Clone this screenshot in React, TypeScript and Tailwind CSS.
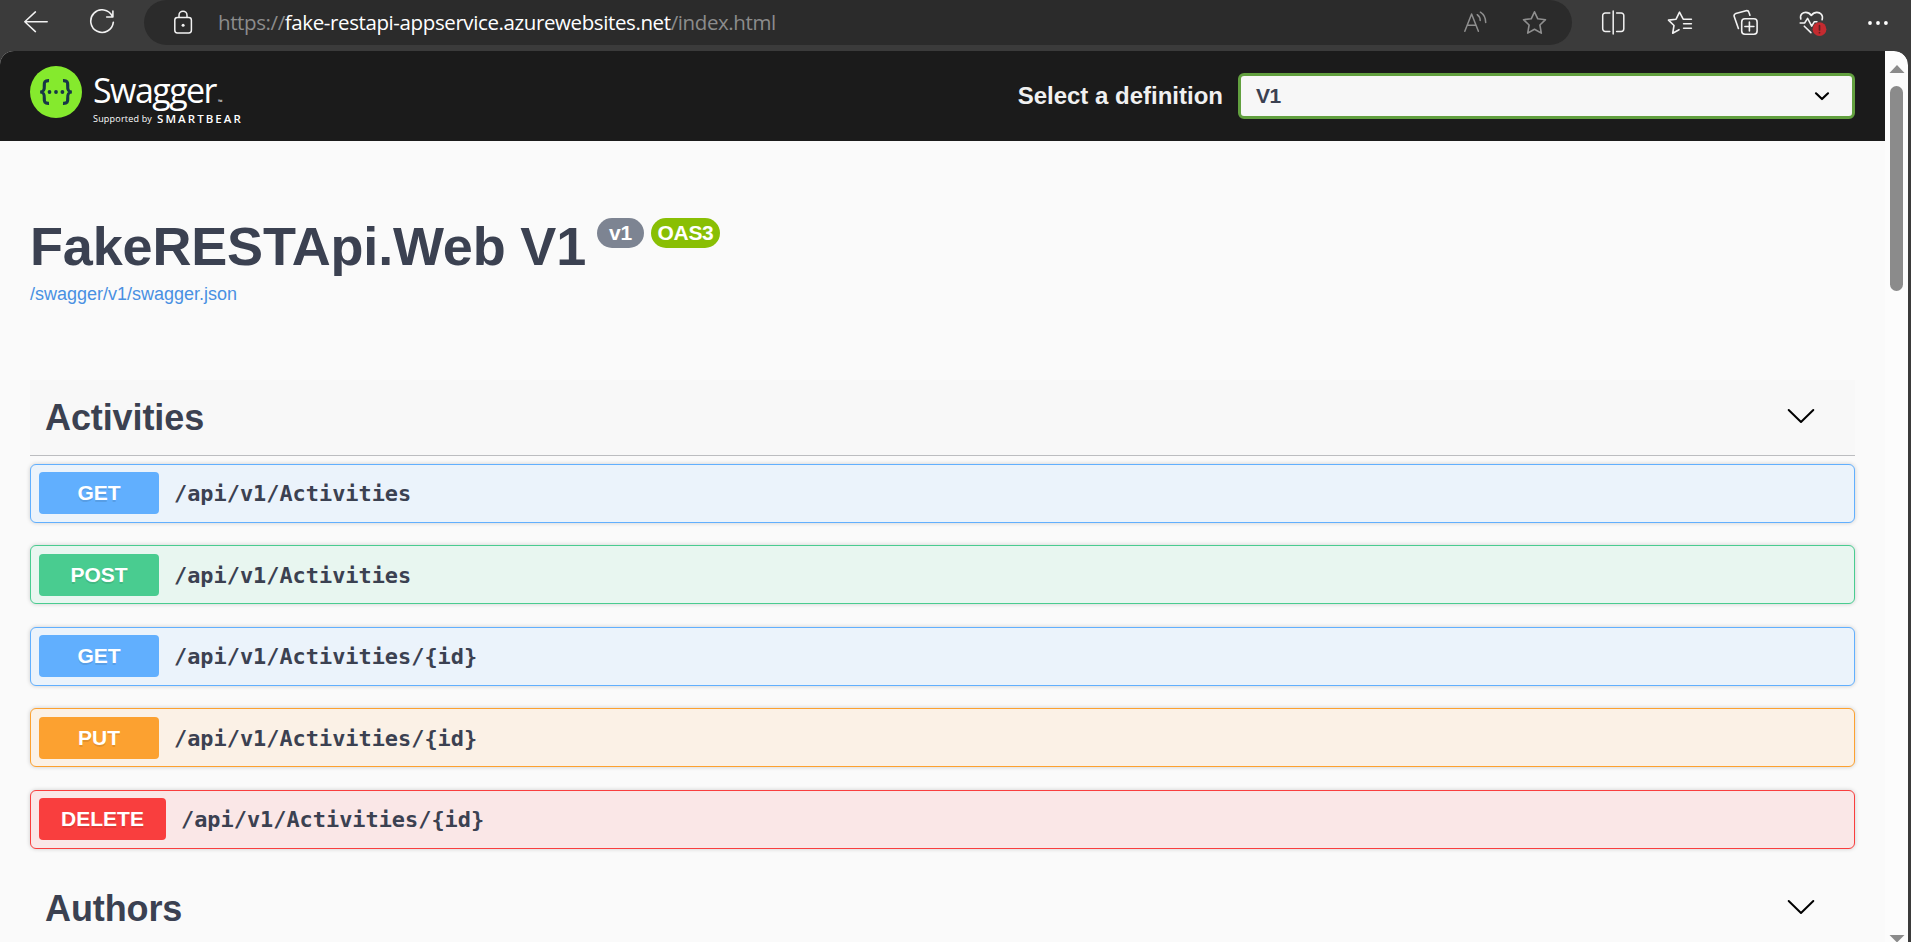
import React from "react";

const sans = "font-['Liberation_Sans',Arial,sans-serif]";

const methods = {
  GET: { row: "border-[#61affe] bg-[#ebf3fb]", badge: "bg-[#61affe] w-[120px]" },
  POST: { row: "border-[#49cc90] bg-[#e8f6f0]", badge: "bg-[#49cc90] w-[120px]" },
  PUT: { row: "border-[#fca130] bg-[#fbf1e6]", badge: "bg-[#fca130] w-[120px]" },
  DELETE: { row: "border-[#f93e3e] bg-[#fae7e7]", badge: "bg-[#f93e3e] w-[127px]" },
};

type Method = keyof typeof methods;

const operations: { method: Method; path: string; gap: string; pad: string }[] = [
  { method: "GET", path: "/api/v1/Activities", gap: "mt-[8px]", pad: "pt-[7px]" },
  { method: "POST", path: "/api/v1/Activities", gap: "mt-[22px]", pad: "pt-[8px]" },
  { method: "GET", path: "/api/v1/Activities/{id}", gap: "mt-[23px]", pad: "pt-[7px]" },
  { method: "PUT", path: "/api/v1/Activities/{id}", gap: "mt-[22px]", pad: "pt-[8px]" },
  { method: "DELETE", path: "/api/v1/Activities/{id}", gap: "mt-[23px]", pad: "pt-[7px]" },
];

function BrowserBar() {
  return (
    <div className="flex h-[51px] shrink-0 items-start bg-[#3b3b3b]">
      <svg className="ml-6 mt-[10px] h-6 w-6 shrink-0" viewBox="0 0 24 24" fill="none" stroke="#f2f2f2" strokeWidth="1.5" strokeLinecap="round" strokeLinejoin="round">
        <path d="M23.2 11.7H.8M11.4 1.9L.8 11.7l10.6 9.9" />
      </svg>
      <svg className="ml-[41px] mt-[9px] h-[27px] w-[27px] shrink-0" viewBox="0 0 27 27" fill="none" stroke="#f2f2f2" strokeWidth="1.6" strokeLinecap="round" strokeLinejoin="round">
        <path d="M23.2 7.1A11.3 11.3 0 1 0 24.3 13.4M23.9 2v6h-6.2" />
      </svg>
      <div className="ml-[28px] flex h-[45px] w-[1428px] shrink-0 items-start rounded-[23px] bg-[#2b2b2b]">
        <svg className="ml-[29px] mt-[10px] h-6 w-5 shrink-0" viewBox="0 0 20 24" fill="none" stroke="#f2f2f2" strokeWidth="1.5">
          <rect x="1.8" y="7.5" width="16.6" height="15.4" rx="2.6" />
          <path d="M6 7.2V5.2a4 4 0 0 1 8 0v2" />
          <circle cx="10.1" cy="15.2" r="1.5" fill="#f2f2f2" stroke="none" />
        </svg>
        <div className="ml-[25px] w-[1245px] shrink-0 whitespace-pre pt-[7px] font-['Open_Sans','Noto_Sans',sans-serif] text-[20.5px] leading-[30px] tracking-[-0.39px] text-[#8c8c8c]">
          https://<span className="text-white">fake-restapi-appservice.azurewebsites.net</span>/index.html
        </div>
        <div className="flex shrink-0 pt-[10px]">
          <svg className="h-6 w-6" viewBox="0 0 24 24" fill="none" stroke="#8f8f8f" strokeWidth="1.5" strokeLinecap="round" strokeLinejoin="round">
            <path d="M1.800 21.300L8.600 4l6.800 17.300M4.200 15.300h8.800M14.200 4.700c2 1.500 3 3.600 3 5.900M17.400 2.200c3.400 2.200 5.300 6 5.300 10.400" />
          </svg>
          <svg className="ml-[35px] h-[25px] w-[25px]" viewBox="0 0 25 25" fill="none" stroke="#8f8f8f" strokeWidth="1.6" strokeLinejoin="round">
            <path d="M12.500 1.800l3.300 7 7.700.9-5.600 5.300 1.400 8.100-6.800-3.900-6.800 3.900 1.400-8.100L1.500 9.700l7.700-.9z" />
          </svg>
        </div>
      </div>
      <svg className="ml-[29px] mt-[10px] h-[25px] w-6 shrink-0" viewBox="0 0 24 25" fill="none" stroke="#f2f2f2" strokeWidth="1.5" strokeLinecap="round">
        <path d="M12.2 1v23M8.800 3H4.300a2.600 2.600 0 0 0-2.600 2.600v13.200a2.600 2.600 0 0 0 2.600 2.600h4.500M15.600 3h4.600a2.600 2.600 0 0 1 2.600 2.600v13.200a2.600 2.600 0 0 1-2.600 2.600h-4.600" />
      </svg>
      <svg className="ml-[42px] mt-[10px] h-[25px] w-[26px] shrink-0" viewBox="0 0 26 25" fill="none" stroke="#f2f2f2" strokeWidth="1.6" strokeLinecap="round" strokeLinejoin="round">
        <path d="M24.400 9.200h-8.200l-3.700-7-3.400 7-7.600.9 5.500 5.400-1.300 7.700 6.300-3.500M16.600 13.800h7.800M16.600 18.300h7.800" />
      </svg>
      <svg className="ml-[40px] mt-[9px] h-[27px] w-[26px] shrink-0" viewBox="0 0 26 27" fill="none" stroke="#f2f2f2" strokeWidth="1.6" strokeLinecap="round" strokeLinejoin="round">
        <rect x="8.7" y="9.8" width="15.4" height="15.4" rx="3.2" />
        <path d="M16.400 13v9M11.900 17.500h9M5.400 19.400L1.300 7.800A2.600 2.600 0 0 1 2.800 4.500L13 1.800a2.500 2.500 0 0 1 3 1.700l.9 2.700" />
      </svg>
      <svg className="ml-[40px] mt-[9px] h-[28px] w-[28px] shrink-0" viewBox="0 0 28 28" fill="none" stroke="#f2f2f2" strokeWidth="1.6" strokeLinecap="round" strokeLinejoin="round">
        <path d="M1.800 10C.5 5 4.100 3.400 6.800 3.400c2.300 0 4.100 1.200 5.500 3 1.400-1.800 3.200-3 5.600-3 3.400 0 6.600 2.600 5.200 7.400M1.200 14h4.400l3-4.600 4.100 7.700 2.500-4.300h2.700M5.300 17.200l6.600 6.400" />
        <circle cx="20.5" cy="20.2" r="6.9" fill="#c42b30" stroke="none" />
        <path d="M20.500 16.700v4.200M20.500 23.600v.1" stroke="#5f2022" strokeWidth="1.7" />
      </svg>
      <svg className="ml-[40px] mt-[19px] h-2 w-[22px] shrink-0" viewBox="0 0 22 8" fill="#fff">
        <circle cx="3" cy="4" r="1.9" />
        <circle cx="11" cy="4" r="1.9" />
        <circle cx="18.9" cy="4" r="1.9" />
      </svg>
    </div>
  );
}

function Logo() {
  return (
    <div className="flex">
      <svg className="mt-[15px] h-[52px] w-[52px]" viewBox="0 0 52 52">
        <circle cx="26" cy="26" r="26" fill="#85ea2d" />
        <g fill="none" stroke="#173647" strokeWidth="3.2">
          <path d="M19 14.700c-4.300-.2-4.900 1.400-4.700 4.600.3 4.400-.3 6.300-4 6.700 3.700.4 4.300 2.300 4 6.700-.2 3.200.4 4.800 4.700 4.600" />
          <path d="M33 14.700c4.300-.2 4.900 1.400 4.700 4.600-.3 4.400.3 6.300 4 6.700-3.700.4-4.300 2.300-4 6.700.2 3.200-.4 4.800-4.700 4.600" />
        </g>
        <g fill="#173647">
          <circle cx="19.5" cy="26" r="1.9" />
          <circle cx="26" cy="26" r="1.9" />
          <circle cx="32.4" cy="26" r="1.9" />
        </g>
      </svg>
      <div className="ml-[11px] flex flex-col font-['Open_Sans','Noto_Sans',sans-serif] text-white">
        <div className="mt-[18px] flex h-[43px] items-start whitespace-nowrap">
          <span className="text-[34px] leading-[43px] tracking-[-1.55px]">Swagger</span>
          <span className="ml-[2px] mt-[28px] text-[6px] leading-[10px]">™</span>
        </div>
        <div className="flex h-[14px] items-center whitespace-nowrap text-[9px] leading-[14px]">
          <span className="tracking-[0.2px]">Supported by</span>
          <span className="ml-[5px] text-[11.5px] font-semibold tracking-[2.05px]">SMARTBEAR</span>
        </div>
      </div>
    </div>
  );
}

function Topbar() {
  return (
    <header className="flex h-[90px] shrink-0 justify-between bg-[#1b1b1b] px-[30px]">
      <Logo />
      <div className="flex pt-[22px]">
        <span className="mr-[15px] pt-[8px] text-[24px] font-bold leading-[30px] text-[#f0f0f0]">Select a definition</span>
        <div className="flex h-[46px] w-[617px] items-center justify-between rounded-[6px] border-[3px] border-[#62a03f] bg-[#f7f7f7] pl-[15px] pr-[22px]">
          <span className="text-[21px] font-bold leading-6 tracking-[-0.6px] text-[#3b4151]">V1</span>
          <svg className="h-[10px] w-4" viewBox="0 0 16 10" fill="none" stroke="#000" strokeWidth="2.2" strokeLinecap="round" strokeLinejoin="round">
            <path d="M2 2.300l6 5.700L14 2.300" />
          </svg>
        </div>
      </div>
    </header>
  );
}

function TagHeader({ name, className }: { name: string; className: string }) {
  return (
    <div className={`flex items-start justify-between border-b pl-[15px] pr-[39px] ${className}`}>
      <h3 className="pt-[16px] text-[36px] font-bold leading-[44px] tracking-[-0.1px] text-[#3b4151]">{name}</h3>
      <svg className="mt-[27px] h-[18px] w-[30px]" viewBox="0 0 30 18" fill="none" stroke="#000" strokeWidth="2" strokeLinecap="round" strokeLinejoin="round">
        <path d="M2.700 3L15 15L27.300 3" />
      </svg>
    </div>
  );
}

function Operation({ method, path, gap, pad }: (typeof operations)[number]) {
  const m = methods[method];
  return (
    <div className={`flex h-[59px] shrink-0 items-start rounded-[6px] border pl-[8px] shadow-[0_0_4px_rgba(0,0,0,0.19)] ${gap} ${pad} ${m.row}`}>
      <span className={`flex h-[42px] items-center justify-center rounded-[4px] pb-px text-[21px] font-bold text-white [text-shadow:0_1.5px_0_rgba(0,0,0,0.1)] ${m.badge}`}>
        {method}
      </span>
      <span className="ml-[15px] pt-px font-['DejaVu_Sans_Mono',monospace] text-[21.9px] font-bold leading-[42px] text-[#3b4151]">{path}</span>
    </div>
  );
}

function Scrollbar() {
  return (
    <div className="flex w-[23px] shrink-0 flex-col items-center rounded-tr-[14px] bg-[#fcfcfc]">
      <svg className="mt-[14px] h-2 w-4 shrink-0" viewBox="0 0 16 8" fill="#8b8b8b">
        <path d="M.5 8L8 0l7.500 8z" />
      </svg>
      <div className="mt-[13px] h-[205px] w-[13px] shrink-0 rounded-full bg-[#8b8b8b]" />
      <svg className="mt-auto h-[7px] w-4 shrink-0" viewBox="0 0 16 7" fill="#8b8b8b">
        <path d="M.5 0h15L8.500 7h-1z" />
      </svg>
    </div>
  );
}

export default function App() {
  return (
    <div className={`flex h-[942px] w-[1911px] flex-col overflow-hidden bg-[#3b3b3b] ${sans}`}>
      <BrowserBar />
      <div className="flex h-[891px] w-[1908px] overflow-hidden rounded-t-[14px]">
        <main className="flex w-[1885px] shrink-0 flex-col bg-[#fafafa]">
          <Topbar />
          <div className="flex flex-col px-[30px]">
            <div className="mt-[73px] flex h-[65px] items-start">
              <h2 className="w-[555px] whitespace-nowrap text-[54px] font-bold leading-[64px] tracking-[-0.17px] text-[#3b4151]">FakeRESTApi.Web V1</h2>
              <span className="ml-[12px] mt-[4px] flex h-[30px] w-[47px] items-center justify-center rounded-[15px] bg-[#7d8492] text-[21px] font-bold tracking-[-0.3px] text-white">v1</span>
              <span className="ml-[7px] mt-[4px] flex h-[30px] w-[69px] items-center justify-center rounded-[15px] bg-[#89bf04] text-[21px] font-bold tracking-[-0.3px] text-white">OAS3</span>
            </div>
            <a className="mt-[4px] text-[18px] leading-[22px] text-[#4990e2]">/swagger/v1/swagger.json</a>
            <TagHeader name="Activities" className="mt-[75px] h-[76px] border-[#bcbdc0] bg-[#f8f8f8]" />
            {operations.map((op, i) => (
              <Operation key={i} {...op} />
            ))}
            <TagHeader name="Authors" className="mt-[22px] h-[76px] border-transparent" />
          </div>
        </main>
        <Scrollbar />
      </div>
    </div>
  );
}
